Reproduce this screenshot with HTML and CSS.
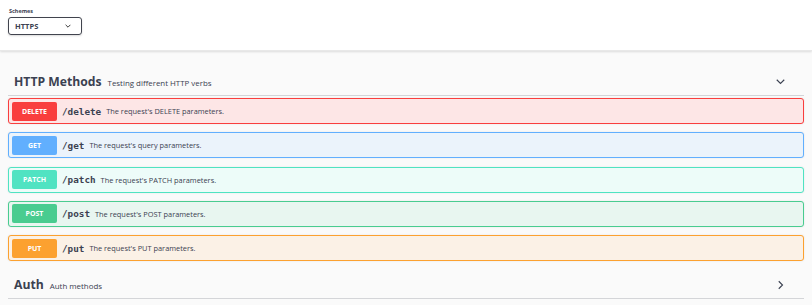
FILE: index.html
```html
<!DOCTYPE html>
<html>
<head>
<meta charset="utf-8">
<link rel="stylesheet" href="styles.css">
</head>
<body>
<div class="topbar">
  <div class="schemes">
    <div class="schemes-label">Schemes</div>
    <div class="select"><span>HTTPS</span>
      <svg class="sel-arrow" viewBox="0 0 10 6" width="6" height="4"><path d="M1 1l4 4 4-4" fill="none" stroke="#333" stroke-width="1.6"/></svg>
    </div>
  </div>
</div>
<div class="content">
  <div class="tag">
    <div class="tag-title"><span class="tag-name">HTTP Methods</span><span class="tag-desc">Testing different HTTP verbs</span></div>
    <svg class="chev" viewBox="0 0 12 8" width="11" height="6"><path d="M1 1l5 5 5-5" fill="none" stroke="#3b4151" stroke-width="1.5"/></svg>
  </div>
  <div class="ops">
    <div class="op op-delete"><span class="badge">DELETE</span><span class="path">/delete</span><span class="desc">The request's DELETE parameters.</span></div>
    <div class="op op-get"><span class="badge">GET</span><span class="path">/get</span><span class="desc">The request's query parameters.</span></div>
    <div class="op op-patch"><span class="badge">PATCH</span><span class="path">/patch</span><span class="desc">The request's PATCH parameters.</span></div>
    <div class="op op-post"><span class="badge">POST</span><span class="path">/post</span><span class="desc">The request's POST parameters.</span></div>
    <div class="op op-put"><span class="badge">PUT</span><span class="path">/put</span><span class="desc">The request's PUT parameters.</span></div>
  </div>
  <div class="tag">
    <div class="tag-title"><span class="tag-name">Auth</span><span class="tag-desc">Auth methods</span></div>
    <svg class="chev chev-right" viewBox="0 0 8 12" width="6" height="10"><path d="M1 1l5 5-5 5" fill="none" stroke="#3b4151" stroke-width="1.5"/></svg>
  </div>
</div>
</body>
</html>
```
FILE: styles.css
```css
html, body {
  margin: 0;
  padding: 0;
  background: #fafafa;
  font-family: "Open Sans", "Liberation Sans", sans-serif;
  color: #3b4151;
}
.topbar {
  background: #fff;
  height: 51px;
  box-shadow: 0 1px 2px rgba(0,0,0,0.12);
  border-bottom: 1px solid #e8e8e8;
  box-sizing: border-box;
  padding: 8px 8px 0;
}
.schemes-label {
  font-size: 5.5px;
  font-weight: 700;
  line-height: 7px;
  margin-left: 1px;
  margin-bottom: 2px;
}
.select {
  width: 74px;
  height: 18px;
  box-sizing: border-box;
  border: 1.5px solid #41444e;
  border-radius: 3px;
  display: flex;
  align-items: center;
  justify-content: space-between;
  padding: 0 10px 0 6px;
  font-size: 7.5px;
  font-weight: 700;
  color: #3b4151;
  box-shadow: 0 1px 2px rgba(0,0,0,0.15);
}
.content {
  padding: 15px 8px 0;
}
.tag {
  height: 30px;
  box-sizing: border-box;
  border-bottom: 1px solid rgba(59,65,81,0.2);
  display: flex;
  align-items: center;
  justify-content: space-between;
  padding: 2px 18px 0 6px;
}
.tag-title {
  display: flex;
  align-items: baseline;
  gap: 6px;
}
.tag-name {
  font-size: 12.2px;
  font-weight: 700;
}
.tag-desc {
  font-size: 7.9px;
}
.chev-right {
  margin-right: 2px;
}
.ops {
  padding-top: 2px;
  padding-bottom: 8px;
}
.op {
  height: 26px;
  box-sizing: border-box;
  border: 1px solid;
  border-radius: 3px;
  display: flex;
  align-items: center;
  padding: 0 3px;
  margin-bottom: 8.25px;
  box-shadow: 0 0 2px rgba(0,0,0,0.1);
}
.op:last-child { margin-bottom: 0; }
.badge {
  width: 45px;
  height: 19px;
  border-radius: 2px;
  color: #fff;
  font-size: 7px;
  font-weight: 700;
  display: flex;
  align-items: center;
  justify-content: center;
  flex: none;
}
.path {
  font-family: "DejaVu Sans Mono", monospace;
  font-weight: 700;
  font-size: 9.3px;
  margin-left: 5px;
  color: #3b4151;
}
.desc {
  font-size: 7.4px;
  margin-left: 5px;
  color: #3b4151;
}
.op-delete { background: #fde6e6; border-color: #f93e3e; }
.op-delete .badge { background: #f93e3e; }
.op-get { background: #ebf3fb; border-color: #61affe; }
.op-get .badge { background: #61affe; }
.op-patch { background: #edfcf9; border-color: #50e3c2; }
.op-patch .badge { background: #50e3c2; }
.op-post { background: #e8f6f0; border-color: #49cc90; }
.op-post .badge { background: #49cc90; }
.op-put { background: #fbf1e6; border-color: #fca130; }
.op-put .badge { background: #fca130; }
```
